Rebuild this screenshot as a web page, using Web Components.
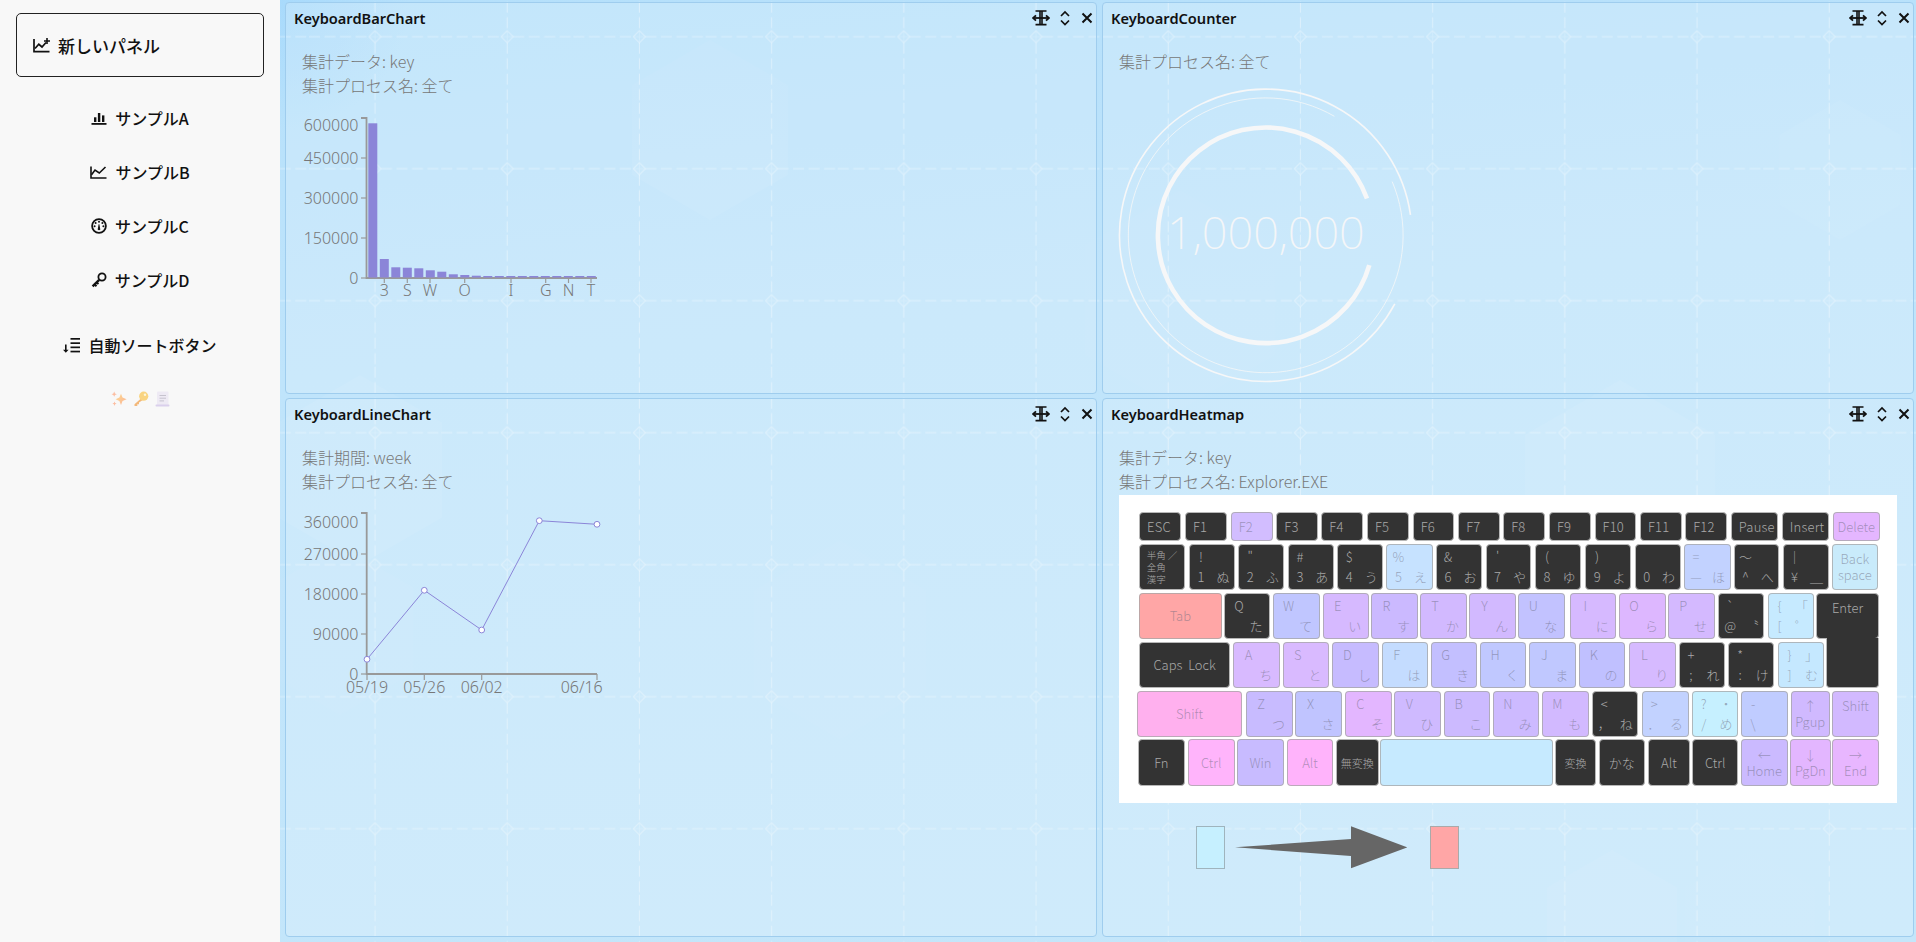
<!DOCTYPE html>
<html lang="ja"><head><meta charset="utf-8"><title>Keyboard Dashboard</title>
<style>
html,body{margin:0;height:942px;overflow:hidden;background:#f8f8f8;font-family:"Noto Sans","Noto Sans CJK JP",sans-serif}
dash-app{display:flex;width:1916px;height:942px}
</style></head><body>
<dash-app></dash-app>
<script>
const FONT='"Noto Sans","Noto Sans CJK JP",sans-serif';
const JP='"Noto Sans CJK JP","Noto Sans",sans-serif';
function base(tag,html){customElements.define(tag,class extends HTMLElement{constructor(){super();this.attachShadow({mode:'open'}).innerHTML=html;}});}

base('side-button',`<style>:host{display:flex;align-items:center;gap:8px;box-sizing:border-box;height:64px;margin:13px 16px 0;padding-left:16px;border:1px solid #222;border-radius:5px;color:#111;font:500 17px ${JP}}::slotted(svg){flex:none}</style><slot name="icon"></slot><slot></slot>`);
base('side-item',`<style>:host{display:flex;align-items:center;justify-content:center;gap:8px;height:54px;color:#111;font:500 16px ${JP}}::slotted(svg){flex:none}</style><slot name="icon"></slot><slot></slot>`);
base('side-emoji',`<style>:host{display:flex;justify-content:center;gap:6px;margin-top:19px;opacity:.62}</style><slot></slot>`);
base('side-bar',`<style>:host{display:block;flex:none;width:280px;height:942px;background:#f8f8f8}.s{height:14px}.t{height:11px}</style><slot name="top"></slot><div class="s"></div><slot name="nav"></slot><div class="t"></div><slot name="sort"></slot><slot name="foot"></slot>`);

customElements.define('grid-backdrop',class extends HTMLElement{constructor(){super();
 const hex=(cx,cy,r,o)=>{let p=[];for(let i=0;i<6;i++){const a=Math.PI/3*i+Math.PI/6;p.push((cx+r*Math.cos(a)).toFixed(1)+','+(cy+r*Math.sin(a)).toFixed(1));}return `<polygon points="${p.join(' ')}" fill="#fff" opacity="${o}"/>`;};
 const hs=[[430,130,90,.05],[80,470,95,.05],[60,630,85,.03],[1340,490,110,.05],[1332,925,75,.06],[1470,925,75,.03],[1560,170,70,.04],[560,640,100,.02],[900,300,110,.02]];
 this.attachShadow({mode:'open'}).innerHTML=`<style>:host{position:absolute;inset:0;display:block;pointer-events:none}svg{display:block}</style>
 <svg width="1636" height="942"><defs><pattern id="g" patternUnits="userSpaceOnUse" x="29" y="-29.3" width="132.2" height="132">
 <g stroke="#fff" stroke-opacity=".4" fill="none"><path d="M0 66H60M72 66H132.2" stroke-dasharray="11 4.5"/><path d="M66 0V60M66 72V132" stroke-dasharray="11 4.5"/><path d="M66 60L72 66L66 72L60 66Z"/><path d="M66 61V71M61 66H71" stroke-opacity=".2"/></g></pattern></defs>
 ${hs.map(h=>hex(...h)).join('')}<rect width="1636" height="942" fill="url(#g)"/></svg>`;}});

base('dash-grid',`<style>:host{position:relative;display:grid;flex:1;grid-template-columns:812px 812px;grid-template-rows:391.5px 539px;gap:4.5px 5px;box-sizing:border-box;height:942px;padding:2px 2px 5px 5px;background:radial-gradient(circle at 0 0,rgba(160,214,252,.6),rgba(160,214,252,0) 130px),linear-gradient(175deg,#b5e0fb 0%,#bfe4fb 35%,#c4e6fa 100%)}</style><grid-backdrop></grid-backdrop><slot></slot>`);

customElements.define('dash-panel',class extends HTMLElement{constructor(){super();
 this.attachShadow({mode:'open'}).innerHTML=`<style>:host{position:relative;display:block;box-sizing:border-box;border:1px solid #9fcdee;border-radius:4px;background:rgba(255,255,255,.2);min-width:0}
 header{display:flex;align-items:center;justify-content:space-between;height:30px;padding:0 2px 0 8px;color:#111;font:600 14.6px ${FONT}}
 nav{display:flex;align-items:center;gap:9px}svg{display:block}
 main{padding:16px 16px 0}</style>
 <header><span id="t"></span><nav>
 <svg width="18" height="18" viewBox="0 0 18 18" fill="none" stroke="#111" stroke-width="1.6"><path d="M3.5 2H14.5M3.5 15.6H14.5M8 2V15.6M10 2V15.6" /><path d="M1 9H17" stroke-width="1.8"/><path d="M4 6.3L1 9L4 11.7M14 6.3L17 9L14 11.7" stroke-width="1.8"/></svg>
 <svg width="12" height="18" viewBox="0 0 12 18" fill="none" stroke="#111" stroke-width="1.7"><path d="M2 7L6 3L10 7M2 11.5L6 15.5L10 11.5"/></svg>
 <svg width="14" height="18" viewBox="0 0 14 18" fill="none" stroke="#111" stroke-width="2"><path d="M2.5 4.5L11.5 13.5M11.5 4.5L2.5 13.5"/></svg>
 </nav></header><main><slot></slot></main>`;}
 connectedCallback(){this.shadowRoot.getElementById('t').textContent=this.getAttribute('heading');}});

base('panel-info',`<style>:host{display:block;color:#777;font:300 16px/24px ${JP}}</style><slot></slot>`);

const axisStyle=`<style>:host{display:block}svg{display:block;overflow:visible}text{font:300 16px ${FONT};fill:#777}</style>`;
customElements.define('bar-chart',class extends HTMLElement{constructor(){super();
 const tops=[123.3,259,267.3,267.7,268.3,270.3,271.7,274.3,275,275.7,276,276,276,276,276,276,276,276,276,276];
 const bars=tops.map((t,i)=>`<rect x="${(368.3+i*11.5).toFixed(1)}" y="${t}" width="9" height="${277.5-t}" fill="#8b85d8"/>`).join('');
 const yt=[[118,125,'600000'],[158,158,'450000'],[198,198,'300000'],[238,238,'150000'],[278,278,'0']];
 const xt=[[384.3,'3'],[407.3,'S'],[430,'W'],[464.7,'O'],[511,'I'],[545.7,'G'],[568.5,'N'],[591,'T']];
 this.attachShadow({mode:'open'}).innerHTML=axisStyle+`<style>:host{margin-top:8px}</style><svg width="310" height="195" viewBox="302 105 310 195">
 <path d="M361 118H366.5V278H597" fill="none" stroke="#999" stroke-width="1.8"/>
 ${yt.map(t=>`<path d="M361 ${t[0]}H366" stroke="#999" stroke-width="1.2"/><text x="358.5" y="${t[1]+5.5}" text-anchor="end">${t[2]}</text>`).join('')}
 ${bars}
 ${xt.map(t=>`<path d="M${t[0]} 278V283" stroke="#999" stroke-width="1.2"/><text x="${t[0]}" y="296" text-anchor="middle">${t[1]}</text>`).join('')}
 </svg>`;}});
customElements.define('line-chart',class extends HTMLElement{constructor(){super();
 const yt=[[513,522,'360000'],[554,554,'270000'],[594,594,'180000'],[634,634,'90000'],[674,674,'0']];
 const pts=[[367,659.3],[424.3,590.3],[481.7,630],[539.3,520.7],[597,524.3]];
 const xt=[[367,367,'05/19'],[424.3,424.3,'05/26'],[481.7,481.7,'06/02'],[597,581.7,'06/16']];
 this.attachShadow({mode:'open'}).innerHTML=axisStyle+`<style>:host{margin-top:8px}</style><svg width="310" height="195" viewBox="302 501 310 195">
 <path d="M361 513H366.7V674H597" fill="none" stroke="#999" stroke-width="1.8"/>
 ${yt.map(t=>`<path d="M361 ${t[0]}H366" stroke="#999" stroke-width="1.2"/><text x="358.5" y="${t[1]+5.5}" text-anchor="end">${t[2]}</text>`).join('')}
 ${xt.map(t=>`<path d="M${t[0]} 674V680" stroke="#999" stroke-width="1.2"/><text x="${t[1]}" y="692.5" text-anchor="middle">${t[2]}</text>`).join('')}
 <polyline points="${pts.map(p=>p.join(',')).join(' ')}" fill="none" stroke="#8b85d8" stroke-width="1"/>
 ${pts.map(p=>`<circle cx="${p[0]}" cy="${p[1]}" r="2.9" fill="#fff" stroke="#8b85d8" stroke-width="1"/>`).join('')}
 </svg>`;}});
customElements.define('ring-counter',class extends HTMLElement{constructor(){super();
 const C=[1265.7,235.3];
 const arc=(r,a0,a1,w)=>{
  const P=a=>[C[0]+r*Math.cos(a*Math.PI/180),C[1]+r*Math.sin(a*Math.PI/180)].map(v=>v.toFixed(2)).join(' ');
  let d=a1-a0;while(d<0)d+=360;
  return `<path d="M${P(a0)}A${r} ${r} 0 ${d>180?1:0} 1 ${P(a1)}" fill="none" stroke="#f6f7f8" stroke-width="${w}"/>`;};
 this.attachShadow({mode:'open'}).innerHTML=`<style>:host{display:block}svg{display:block;overflow:visible}text{font:200 45px ${FONT};fill:#f4f6f8}</style>
 <svg width="310" height="316" viewBox="1119 73 310 316">
 ${arc(146.2,28,-8,1.6)}${arc(137.4,-23,-60,.8)}${arc(107.8,16,-20,4.6)}
 <text x="1266" y="248.5" text-anchor="middle">1,000,000</text></svg>`;}});

customElements.define('key-cap',class extends HTMLElement{constructor(){super();
 this.attachShadow({mode:'open'}).innerHTML=`<style>
 :host{display:grid;box-sizing:border-box;flex:none;position:relative;border:1px solid rgba(165,165,165,.75);border-radius:4px;color:rgba(105,105,125,.52);font:300 13px/16px ${JP};background:var(--c,#333)}
 :host([dark]){color:#a9a9a9;border-color:#b8b8b8}
 :host([mode=c]){place-items:center;text-align:center}
 :host([mode=l]){align-items:center;justify-items:start;padding-left:7px;letter-spacing:.2px}
 :host([mode=t]){justify-items:center;align-items:start;padding-top:6px;text-align:center}
 :host([mode=q]){grid-template-columns:1fr 1fr;grid-template-rows:20px 20px;align-content:center;justify-items:center;align-items:center}
 #lo{position:absolute;left:8.7px;right:-1px;top:44px;height:50px;background:#333;border:1px solid #b8b8b8;border-top:0;border-radius:0 0 4px 4px;box-sizing:border-box}
 .sm{font-size:9.5px;line-height:12px;text-align:left}
 .a{margin-left:6px}.z{margin-right:4px}
 </style><div id="c" style="display:contents"></div>`;}
 set label(v){const c=this.shadowRoot.getElementById('c');
  if(Array.isArray(v)){this.setAttribute('mode','q');const letter=v[2]==='';c.innerHTML=v.map((x,i)=>`<span class="${letter&&i===0?'a':letter&&i===3?'z':''}">${x}</span>`).join('');}
  else c.innerHTML=`<span>${v}</span>`;}
 addLower(){const d=document.createElement('div');d.id='lo';this.shadowRoot.appendChild(d);}
});

const D='#333333';
const ROWS=[
 {y:512.3,h:28.7,k:[
  [1139,1181,D,'ESC','l'],[1185,1226.7,D,'F1','l'],[1230.7,1272.7,'#d2bdff','F2','l'],[1276.3,1318,D,'F3','l'],[1321.3,1363,D,'F4','l'],[1367,1408.7,D,'F5','l'],[1412.7,1454.3,D,'F6','l'],[1458.3,1500,D,'F7','l'],[1503.3,1544.7,D,'F8','l'],[1549,1590.7,D,'F9','l'],[1594.7,1636.3,D,'F10','l'],[1640,1681.7,D,'F11','l'],[1685.3,1727,D,'F12','l'],[1731,1778.3,D,'Pause','l'],[1782,1829.3,D,'Insert','l'],[1832.7,1880,'#e4b6ff','Delete','c']]},
 {y:544,h:46,k:[
  [1139,1185,D,'<div class="sm">半角 ／<br>全角<br>漢字</div>','c'],[1189,1235,D,['!','','1','ぬ']],[1238.3,1284.3,D,['"','','2','ふ']],[1288,1333.7,D,['#','','3','あ']],[1337.3,1383.3,D,['$','','4','う']],[1386.3,1432.7,'#c6e2ff',['%','','5','え']],[1436,1482,D,['&amp;','','6','お']],[1485.7,1531.5,D,["'",'','7','や']],[1535,1581,D,['(','','8','ゆ']],[1585.3,1631,D,[')','','9','よ']],[1634.7,1680.7,D,['','','0','わ']],[1684,1730.7,'#c2d2ff',['=','','—','ほ']],[1733.7,1779.3,D,['～','','^','へ']],[1782.7,1828.7,D,['｜','','¥','＿']],[1831.7,1878.3,'#c9ebfb','Back<br>space','c']]},
 {y:593,h:46.3,k:[
  [1139,1221.7,'#ffa6a6','Tab','c'],[1224,1270,D,['Q','','','た']],[1273.3,1320,'#c0c6ff',['W','','','て']],[1322.7,1368.7,'#d6b9ff',['E','','','い']],[1371.3,1417.7,'#cbb9ff',['R','','','す']],[1420,1466.7,'#d2b9ff',['T','','','か']],[1469.3,1516,'#d2b9ff',['Y','','','ん']],[1518,1565.3,'#c2c2ff',['U','','','な']],[1570.3,1616.3,'#d6b9ff',['I','','','に']],[1619,1665.7,'#ddb7ff',['O','','','ら']],[1668.3,1714.7,'#d4b9ff',['P','','','せ']],[1718.3,1764.3,D,['`','','@','〝']],[1767.7,1813.7,'#c6eaff',['{','「','[','゜']],[1816.3,1879,D,'Enter','t','lower']]},
 {y:641.7,h:46.6,k:[
  [1139,1230.3,D,'Caps&nbsp; Lock','c'],[1233.3,1280,'#d8baff',['A','','','ち']],[1282.7,1329.3,'#d9baff',['S','','','と']],[1332.3,1378.7,'#c6bbff',['D','','','し']],[1381.7,1428.3,'#c4dcff',['F','','','は']],[1430.7,1477,'#c3bfff',['G','','','き']],[1480,1526.5,'#c0c8ff',['H','','','く']],[1529.3,1576,'#c0c8ff',['J','','','ま']],[1578.7,1625.3,'#c0c0ff',['K','','','の']],[1629.3,1676,'#d6baff',['L','','','り']],[1679,1725,D,['+','',';','れ']],[1728.3,1774.3,D,['*','',':','け']],[1777.7,1823.7,'#c5e8ff',['}','」',']','む']]]},
 {y:690.7,h:46.6,k:[
  [1137.3,1241.7,'#ffb0ee','Shift','c'],[1246,1292.7,'#c8bbff',['Z','','','つ']],[1295.3,1342.3,'#c0c4ff',['X','','','さ']],[1345.3,1391.7,'#e3b6ff',['C','','','そ']],[1394.3,1441,'#cfbaff',['V','','','ひ']],[1443.7,1490,'#ccbaff',['B','','','こ']],[1492.7,1539.5,'#cdbaff',['N','','','み']],[1542.3,1589,'#d2b9ff',['M','','','も']],[1592.3,1638.3,D,['&lt;','','，','ね']],[1642,1689,'#c2d2ff',['&gt;','','．','る']],[1691.7,1738.3,'#c6f0ff',['?','・','/','め']],[1741,1788,'#c0ccff',['-','','\\','']],[1790.7,1830,'#d0b9ff','↑<br>Pgup','c'],[1832.3,1879,'#d2b9ff','Shift','t']]},
 {y:739.3,h:46.7,k:[
  [1138,1184.7,D,'Fn','c'],[1187.7,1234.7,'#ffb4fb','Ctrl','c'],[1237,1284,'#c8bbff','Win','c'],[1286.7,1333.3,'#ffb3fb','Alt','c'],[1336,1378.7,D,'<span style="font-size:11px">無変換</span>','c'],[1380.3,1552.7,'#c6eaff','','c'],[1555.3,1595.7,D,'<span style="font-size:11px">変換</span>','c'],[1599,1644.7,D,'かな','c'],[1648,1690,D,'Alt','c'],[1692.3,1738.3,D,'Ctrl','c'],[1740.7,1788,'#cbbaff','←<br>Home','c'],[1790.3,1830.7,'#e3b6ff','↓<br>PgDn','c'],[1832.3,1879,'#e8b6ff','→<br>End','c']]}
];
customElements.define('key-board',class extends HTMLElement{constructor(){super();
 const s=this.attachShadow({mode:'open'});
 s.innerHTML=`<style>:host{display:flow-root;height:308px;margin-top:2px;background:#fff}.r{display:flex}</style>`;
 const X0=1119,Y0=495;let cy=Y0;
 ROWS.forEach(r=>{const row=document.createElement('div');row.className='r';row.style.marginTop=(r.y-cy).toFixed(1)+'px';row.style.height=r.h+'px';cy=r.y+r.h;
  let cx=X0;r.k.forEach(k=>{const e=document.createElement('key-cap');e.style.width=(k[1]-k[0]).toFixed(1)+'px';e.style.marginLeft=(k[0]-cx).toFixed(1)+'px';e.style.setProperty('--c',k[2]);
   if(k[2]===D)e.setAttribute('dark','');
   if(k[4])e.setAttribute('mode',k[4]);e.label=k[3];if(k[5])e.addLower();cx=k[1];row.appendChild(e);});
  s.appendChild(row);});
}});
customElements.define('key-arrow',class extends HTMLElement{constructor(){super();
 this.attachShadow({mode:'open'}).innerHTML=`<style>:host{display:flex;align-items:center;height:43px;margin:23px 0 0 77.3px}
 i{display:block;box-sizing:border-box;width:29px;height:42.5px;border:1.2px solid #9fb4bd}
 svg{display:block;margin:0 23px 0 9.7px}</style>
 <i style="background:#c6f0ff"></i>
 <svg width="172.3" height="43" viewBox="1235 826 172.3 43"><polygon points="1235,847.3 1351,839 1351,826.3 1407.3,847.3 1351,868.3 1351,856" fill="#666"/></svg>
 <i style="background:#ffa6a6;border-color:#aaa"></i>`;}});

base('dash-app',`<style>:host{display:flex}</style><slot></slot>`);
const I={
 add:`<svg slot="icon" width="17" height="15" viewBox="0 0 17 15" fill="none" stroke="#111" stroke-width="1.7"><path d="M1 1V13.7H16.5"/><path d="M2 10.5L5.8 6.3L9 9L13 4.5"/><path d="M14 0V6M11 3H17" stroke-width="1.6"/></svg>`,
 bar:`<svg slot="icon" width="16" height="13" viewBox="0 0 16 13" fill="#111"><rect x=".5" y="11" width="15" height="1.8"/><rect x="3" y="5.3" width="2.4" height="4.7"/><rect x="6.9" y="1" width="2.4" height="9"/><rect x="11" y="3.4" width="2.4" height="6.6"/></svg>`,
 line:`<svg slot="icon" width="17" height="13" viewBox="0 0 17 13" fill="none" stroke="#111" stroke-width="1.6"><path d="M1 .5V12H16.5"/><path d="M1.5 8.8L5 4L9.3 7L15.5 1"/></svg>`,
 gauge:`<svg slot="icon" width="16" height="16" viewBox="0 0 16 16"><circle cx="8" cy="8" r="6.9" fill="none" stroke="#111" stroke-width="1.8"/><g fill="#111"><circle cx="8" cy="3.8" r="1"/><circle cx="4.6" cy="5" r="1"/><circle cx="11.4" cy="5" r="1"/><circle cx="3.6" cy="8.3" r="1"/><circle cx="12.4" cy="8.3" r="1"/><path d="M6.7 11.6L7.6 6.3H8.4L9.3 11.6A1.5 1.5 0 0 1 6.7 11.6Z"/></g></svg>`,
 key:`<svg slot="icon" width="16" height="16" viewBox="0 0 16 16" fill="none" stroke="#111"><circle cx="11" cy="5" r="3.6" stroke-width="1.8"/><path d="M8.2 7.8L1.6 14.4" stroke-width="2.4"/><path d="M3.6 12.4L5.5 14.3M5.7 10.4L7.4 12.1" stroke-width="2"/></svg>`,
 sort:`<svg slot="icon" width="17" height="15" viewBox="0 0 17 15" fill="#111" stroke="none"><path d="M2 6.5H3.6V11.8H5.6L2.8 14.7L0 11.8H2Z"/><rect x="7.5" y="0" width="9.5" height="1.7"/><rect x="7.5" y="4.3" width="9.5" height="1.7"/><rect x="7.5" y="8.5" width="9.5" height="1.7"/><rect x="7.5" y="12.7" width="9.5" height="1.7"/></svg>`,
 sp:`<svg width="16" height="16" viewBox="0 0 16 16" role="img" aria-label="sparkles"><defs><linearGradient id="sg" x1="0" y1="0" x2="1" y2="1"><stop offset="0" stop-color="#ffc850"/><stop offset="1" stop-color="#ff8a5c"/></linearGradient></defs><path fill="url(#sg)" d="M10 2.8L11.5 6.5L15.6 8.2L11.5 10L10 14L8.4 10L4.6 8.2L8.4 6.5Z"/><path fill="#ff9a6c" d="M3.2 .5L4 2.4L5.8 3.2L4 4L3.2 5.8L2.4 4L.6 3.2L2.4 2.4ZM3.5 10.5L4.1 12L5.6 12.6L4.1 13.2L3.5 15L2.9 13.2L1.4 12.6L2.9 12Z"/></svg>`,
 ky:`<svg width="16" height="16" viewBox="0 0 16 16" role="img" aria-label="key"><path d="M8.5 7L1.5 13.3V15H4.3V13.3H6V11.5L9.8 9" fill="#f0922e"/><circle cx="10.7" cy="5.2" r="4.6" fill="#fbbf3a"/><circle cx="12" cy="3.8" r="1.2" fill="#fff5c9"/></svg>`,
 sc:`<svg width="15" height="16" viewBox="0 0 15 16" role="img" aria-label="scroll"><rect x="2" y=".5" width="11.5" height="14.5" rx="1" fill="#e9e2f3"/><rect x=".5" y="13.5" width="14" height="2" rx="1" fill="#c8b8e6"/><path d="M4.5 4.5H11M4.5 7.2H11M4.5 9.9H9" stroke="#a9a3b5" stroke-width="1"/></svg>`
};
const app=document.querySelector('dash-app');
app.innerHTML=`
<side-bar>
 <side-button slot="top">${I.add}新しいパネル</side-button>
 <side-item slot="nav">${I.bar}サンプルA</side-item>
 <side-item slot="nav">${I.line}サンプルB</side-item>
 <side-item slot="nav">${I.gauge}サンプルC</side-item>
 <side-item slot="nav">${I.key}サンプルD</side-item>
 <side-item slot="sort">${I.sort}自動ソートボタン</side-item>
 <side-emoji slot="foot">${I.sp}${I.ky}${I.sc}</side-emoji>
</side-bar>
<dash-grid>
 <dash-panel heading="KeyboardBarChart"><panel-info>集計データ: key<br>集計プロセス名: 全て</panel-info><bar-chart></bar-chart></dash-panel>
 <dash-panel heading="KeyboardCounter"><panel-info>集計プロセス名: 全て</panel-info><ring-counter></ring-counter></dash-panel>
 <dash-panel heading="KeyboardLineChart"><panel-info>集計期間: week<br>集計プロセス名: 全て</panel-info><line-chart></line-chart></dash-panel>
 <dash-panel heading="KeyboardHeatmap"><panel-info>集計データ: key<br>集計プロセス名: Explorer.EXE</panel-info><key-board></key-board><key-arrow></key-arrow></dash-panel>
</dash-grid>`;
</script>
</body></html>
